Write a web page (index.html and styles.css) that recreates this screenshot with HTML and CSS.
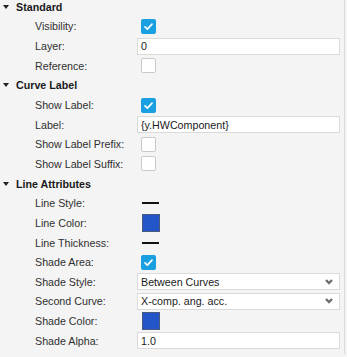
FILE: index.html
```html
<!DOCTYPE html>
<html lang="en">

<head>
  <meta charset="UTF-8" />
  <meta name="viewport" content="width=device-width, initial-scale=1.0" />
  <title>Curve Properties</title>
  <link rel="stylesheet" href="styles.css">
</head>

<body>
  <main class="panel">
    <section class="group">
      <header class="group_header"><span class="caret"></span>Standard</header>
      <div class="row">
        <span class="row_label">Visibility:</span>
        <span class="check check-on"><svg viewBox="0 0 15 15" width="15" height="15"><path d="M4 7.8 L6.4 10.2 L11 5.2" /></svg></span>
      </div>
      <div class="row">
        <span class="row_label">Layer:</span>
        <span class="field">0</span>
      </div>
      <div class="row">
        <span class="row_label">Reference:</span>
        <span class="check"></span>
      </div>
    </section>

    <section class="group">
      <header class="group_header"><span class="caret"></span>Curve Label</header>
      <div class="row">
        <span class="row_label">Show Label:</span>
        <span class="check check-on"><svg viewBox="0 0 15 15" width="15" height="15"><path d="M4 7.8 L6.4 10.2 L11 5.2" /></svg></span>
      </div>
      <div class="row">
        <span class="row_label">Label:</span>
        <span class="field">{y.HWComponent}</span>
      </div>
      <div class="row">
        <span class="row_label">Show Label Prefix:</span>
        <span class="check"></span>
      </div>
      <div class="row">
        <span class="row_label">Show Label Suffix:</span>
        <span class="check"></span>
      </div>
    </section>

    <section class="group">
      <header class="group_header"><span class="caret"></span>Line Attributes</header>
      <div class="row">
        <span class="row_label">Line Style:</span>
        <span class="line_sample"></span>
      </div>
      <div class="row">
        <span class="row_label">Line Color:</span>
        <span class="swatch"></span>
      </div>
      <div class="row">
        <span class="row_label">Line Thickness:</span>
        <span class="line_sample"></span>
      </div>
      <div class="row">
        <span class="row_label">Shade Area:</span>
        <span class="check check-on"><svg viewBox="0 0 15 15" width="15" height="15"><path d="M4 7.8 L6.4 10.2 L11 5.2" /></svg></span>
      </div>
      <div class="row">
        <span class="row_label">Shade Style:</span>
        <span class="field field-select">Between Curves
          <svg class="chevron" viewBox="0 0 8 6" width="8" height="6"><path d="M1 1 L4 4 L7 1" /></svg>
        </span>
      </div>
      <div class="row">
        <span class="row_label">Second Curve:</span>
        <span class="field field-select">X-comp. ang. acc.
          <svg class="chevron" viewBox="0 0 8 6" width="8" height="6"><path d="M1 1 L4 4 L7 1" /></svg>
        </span>
      </div>
      <div class="row">
        <span class="row_label">Shade Color:</span>
        <span class="swatch"></span>
      </div>
      <div class="row">
        <span class="row_label">Shade Alpha:</span>
        <span class="field">1.0</span>
      </div>
    </section>
  </main>
</body>
</html>
```

FILE: styles.css
```css
html,
body {
  margin: 0;
  background: #f4f4f4;
}

.panel {
  box-sizing: border-box;
  width: 345px;
  height: 357px;
  margin-top: -3px;
  padding-right: 4px;
  border-right: 1px solid #dcdcdc;
  font-family: "Liberation Sans", Arial, Helvetica, sans-serif;
  font-size: 10.7px;
  color: #303030;
}

.group_header {
  display: flex;
  align-items: center;
  height: 19.65px;
  padding-left: 3px;
  font-weight: bold;
  color: #1a1a1a;
}

.caret {
  width: 0;
  height: 0;
  margin-right: 7px;
  border-left: 3px solid transparent;
  border-right: 3px solid transparent;
  border-top: 4px solid #222;
}

.row {
  display: grid;
  grid-template-columns: 102px 1fr;
  align-items: center;
  height: 19.65px;
  padding-left: 35px;
}

.row_label {
  white-space: nowrap;
}

.check {
  box-sizing: border-box;
  display: block;
  width: 15px;
  height: 15px;
  margin-left: 4px;
  border: 1px solid #c9c9c9;
  border-radius: 2px;
  background: #fff;
}

.check-on {
  border: none;
  background: #1a9fe0;
}

.check svg {
  display: block;
}

.check path {
  fill: none;
  stroke: #fff;
  stroke-width: 1.7;
  stroke-linecap: round;
  stroke-linejoin: round;
}

.field {
  box-sizing: border-box;
  display: flex;
  align-items: center;
  height: 17px;
  padding: 0 2px 0 3px;
  border: 1px solid #dadada;
  background: #fff;
  color: #1a1a1a;
  white-space: nowrap;
}

.field-select {
  justify-content: space-between;
  padding-right: 6px;
}

.chevron path {
  fill: none;
  stroke: #6d6d6d;
  stroke-width: 2.3;
}

.line_sample {
  display: block;
  width: 17px;
  height: 2px;
  margin-left: 5px;
  background: #111;
}

.swatch {
  box-sizing: border-box;
  display: block;
  width: 18px;
  height: 18px;
  margin-left: 5px;
  border: 1px solid #4a5a80;
  background: #2354c8;
}
```
